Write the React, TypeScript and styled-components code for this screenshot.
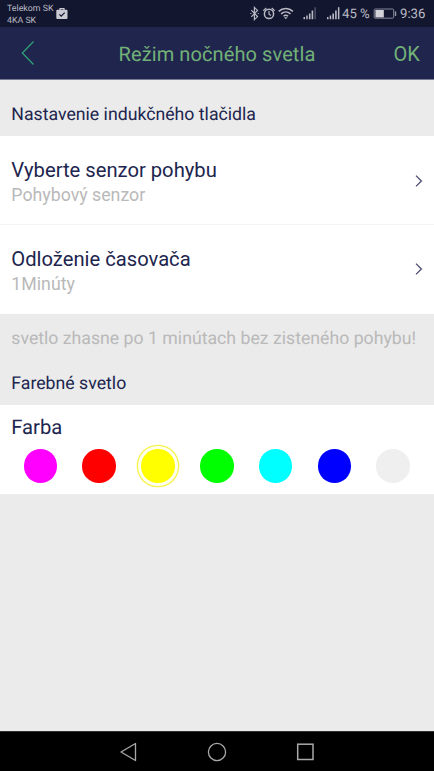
import React from 'react';
import styled, { createGlobalStyle } from 'styled-components';

const GlobalStyle = createGlobalStyle`
  * { box-sizing: border-box; }
  html, body, #root { height: 100%; margin: 0; }
  body { font-family: Roboto, sans-serif; background: #ebebeb; color: #20254e; overflow: hidden; text-rendering: geometricPrecision; }
  button { border: 0; padding: 0; margin: 0; background: none; font: inherit; color: inherit; text-align: left; }
  svg { display: block; flex: none; }
`;

const Screen = styled.div`
  width: 434px;
  height: 771px;
  display: flex;
  flex-direction: column;
  background: #ebebeb;
`;

const StatusBar = styled.div`
  height: 27px;
  flex: none;
  display: flex;
  justify-content: space-between;
  padding: 0 9px 0 7px;
  background: #13162f;
  color: #b9bac4;
`;

const Carriers = styled.div`
  display: flex;
  gap: 3px;
  font-size: 8.8px;
  line-height: 12px;
  padding-top: 3px;
`;

const CarrierIcon = styled.div`
  padding-top: 4px;
`;

const StatusIcons = styled.div`
  display: flex;
  align-items: center;
  height: 27px;
`;

const StatusText = styled.span<{ $width: number }>`
  width: ${p => p.$width}px;
  padding-top: 2px;
  font-size: 13.2px;
  line-height: 27px;
  white-space: pre;
`;

const Header = styled.header`
  height: 53px;
  flex: none;
  display: grid;
  grid-template-columns: 60px 1fr 60px;
  align-items: center;
  background: #20254e;
  border-bottom: 1px solid #777a91;
  color: #72b177;
  font-size: 20px;
`;

const BackButton = styled.button`
  padding-left: 21px;
`;

const Title = styled.h1`
  margin: 0;
  padding-top: 1px;
  font: inherit;
  text-align: center;
  white-space: nowrap;
  letter-spacing: 0.1px;
`;

const Confirm = styled.button`
  padding: 1px 0 0 19.5px;
`;

const SectionTitle = styled.h2<{ $height: number; $top: number }>`
  height: ${p => p.$height}px;
  flex: none;
  margin: 0;
  padding: ${p => p.$top}px 11.3px 0;
  font-size: 17.7px;
  line-height: 22px;
  font-weight: 400;
`;

const Row = styled.button<{ $divided?: boolean }>`
  height: 89px;
  flex: none;
  display: flex;
  align-items: center;
  justify-content: space-between;
  padding: ${p => (p.$divided ? 4 : 2)}px 9.5px 0 11.3px;
  background: #fff;
  border-bottom: ${p => (p.$divided ? '1px solid #f4f4f4' : '0')};
`;

const RowText = styled.span`
  display: flex;
  flex-direction: column;
`;

const Label = styled.span`
  font-size: 20.2px;
  line-height: 26px;
`;

const Value = styled.span`
  font-size: 17.75px;
  line-height: 24px;
  color: #b9b9b9;
`;

const Note = styled.p`
  height: 47px;
  flex: none;
  margin: 0;
  padding: 13px 11.3px 0;
  font-size: 17.7px;
  line-height: 24px;
  color: #b9b9b9;
  white-space: nowrap;
`;

const ColorPanel = styled.section`
  height: 89px;
  flex: none;
  padding: 9px 11.3px 0;
  background: #fff;
`;

const Swatches = styled.div`
  display: flex;
  justify-content: space-between;
  padding: 9px 12.7px 0 12.3px;
`;

const Swatch = styled.button<{ $color: string; $selected?: boolean }>`
  width: 33.5px;
  height: 33.5px;
  border-radius: 50%;
  background: ${p => p.$color};
  box-shadow: ${p => (p.$selected ? '0 0 0 3px #fffff0, 0 0 0 4.3px #f6f34c' : 'none')};
`;

const Spacer = styled.div`
  flex: 1;
`;

const NavBar = styled.nav`
  height: 40px;
  flex: none;
  display: flex;
  justify-content: center;
  align-items: center;
  gap: 68px;
  background: #000;
  border-top: 1px solid #303030;
`;

const NavButton = styled.button`
  width: 20px;
  height: 20px;
`;

const ChevronIcon = styled.svg`
  margin-bottom: 3px;
`;

const Chevron = () => (
  <ChevronIcon width="16" height="16" viewBox="0 0 16 16" fill="none" stroke="#4a4e70" strokeWidth="1.3">
    <path d="M7 2.6 12.4 8 7 13.4" />
  </ChevronIcon>
);

const SignalBars = ({ last }: { last: string }) => (
  <g fill="#b9bac4" stroke="none">
    <path d="M1 10.8h1.5V13H1zM3.7 9.3h1.5V13H3.7zM6.4 7.2h1.6V13H6.4zM9.1 4.2h1.6V13H9.1z" />
    <path d="M11.9 1h1.5v12h-1.5z" fill={last} />
  </g>
);

const colors = ['#ff00ff', '#ff0000', '#ffff00', '#00ff00', '#00ffff', '#0000ff', '#efefef'];

export default function App() {
  const [selected, setSelected] = React.useState(2);
  return (
    <>
      <GlobalStyle />
      <Screen>
        <StatusBar>
          <Carriers>
            <div>Telekom SK<br />4KA SK</div>
            <CarrierIcon>
              <svg width="12" height="13" viewBox="0 0 12 13">
                <path d="M4 3V1.6h4V3" fill="none" stroke="#c9cad2" strokeWidth="1.2" />
                <rect x="0.3" y="2.7" width="11.2" height="9.3" rx="1" fill="#c9cad2" />
                <path d="m3.4 7.3 1.8 1.8 3.5-3.5" fill="none" stroke="#13162f" strokeWidth="1.2" />
              </svg>
            </CarrierIcon>
          </Carriers>
          <StatusIcons>
            <svg width="93" height="27" viewBox="0 0 93 27" fill="none" stroke="#b9bac4" strokeWidth="1.2">
              <path d="m2.3 10.2 6.2 6.4-3.1 3V7.4l3.1 3-6.2 6.4M1.3 13.5h1M8.8 13.5h1" />
              <circle cx="20" cy="13.9" r="4.6" strokeWidth="1.5" />
              <path d="M20 11v3.2l2 1.2M14.3 10.7l3-2.7M25.7 10.7l-3-2.7" />
              <path d="M29.7 11.4c4-3.9 10.2-3.9 14.2 0M32.1 13.9c2.8-2.6 6.6-2.6 9.4 0M34.5 16.2c1.4-1.2 3.2-1.2 4.6 0" strokeWidth="1.5" />
              <path d="m35 17.2 1.8 2.1 1.8-2.1z" fill="#b9bac4" stroke="none" />
              <g transform="translate(53.5 6.2)"><SignalBars last="#4d5067" /></g>
              <g transform="translate(77 6.2)"><SignalBars last="#b9bac4" /></g>
            </svg>
            <StatusText $width={29}>45 %</StatusText>
            <svg width="29" height="12" viewBox="0 0 29 12">
              <rect x="3.2" y="1" width="19.5" height="9.2" rx="1" fill="none" stroke="#85879a" />
              <rect x="4.4" y="2" width="8.4" height="7.4" fill="#d2d2da" />
              <path d="M24.5 3.4v4.6" stroke="#9697a5" strokeWidth="1.4" />
            </svg>
            <StatusText $width={25}>9:36</StatusText>
          </StatusIcons>
        </StatusBar>
        <Header>
          <BackButton aria-label="Späť">
            <svg width="14" height="26" viewBox="0 0 14 26" fill="none" stroke="#31a478" strokeWidth="1.2">
              <path d="M12.5 1.5 1.3 13l11.2 11.5" />
            </svg>
          </BackButton>
          <Title>Režim nočného svetla</Title>
          <Confirm>OK</Confirm>
        </Header>
        <SectionTitle $height={56} $top={24}>Nastavenie indukčného tlačidla</SectionTitle>
        <Row $divided>
          <RowText><Label>Vyberte senzor pohybu</Label><Value>Pohybový senzor</Value></RowText>
          <Chevron />
        </Row>
        <Row>
          <RowText><Label>Odloženie časovača</Label><Value>1Minúty</Value></RowText>
          <Chevron />
        </Row>
        <Note>svetlo zhasne po 1 minútach bez zisteného pohybu!</Note>
        <SectionTitle $height={44} $top={12}>Farebné svetlo</SectionTitle>
        <ColorPanel>
          <Label>Farba</Label>
          <Swatches>
            {colors.map((c, i) => (
              <Swatch key={c} $color={c} $selected={i === selected} aria-label={c} onClick={() => setSelected(i)} />
            ))}
          </Swatches>
        </ColorPanel>
        <Spacer />
        <NavBar>
          <NavButton aria-label="Back">
            <svg width="20" height="20" viewBox="0 0 20 20" fill="none" stroke="#a9a9a9" strokeWidth="1.3" strokeLinejoin="round">
              <path d="M16.5 1.5v17L2 10z" />
            </svg>
          </NavButton>
          <NavButton aria-label="Home">
            <svg width="20" height="20" viewBox="0 0 20 20" fill="none" stroke="#a9a9a9" strokeWidth="1.3">
              <circle cx="10" cy="10" r="8.6" />
            </svg>
          </NavButton>
          <NavButton aria-label="Recent">
            <svg width="20" height="20" viewBox="0 0 20 20" fill="none" stroke="#a9a9a9" strokeWidth="1.5">
              <rect x="2.7" y="2.2" width="15.3" height="15.3" />
            </svg>
          </NavButton>
        </NavBar>
      </Screen>
    </>
  );
}
